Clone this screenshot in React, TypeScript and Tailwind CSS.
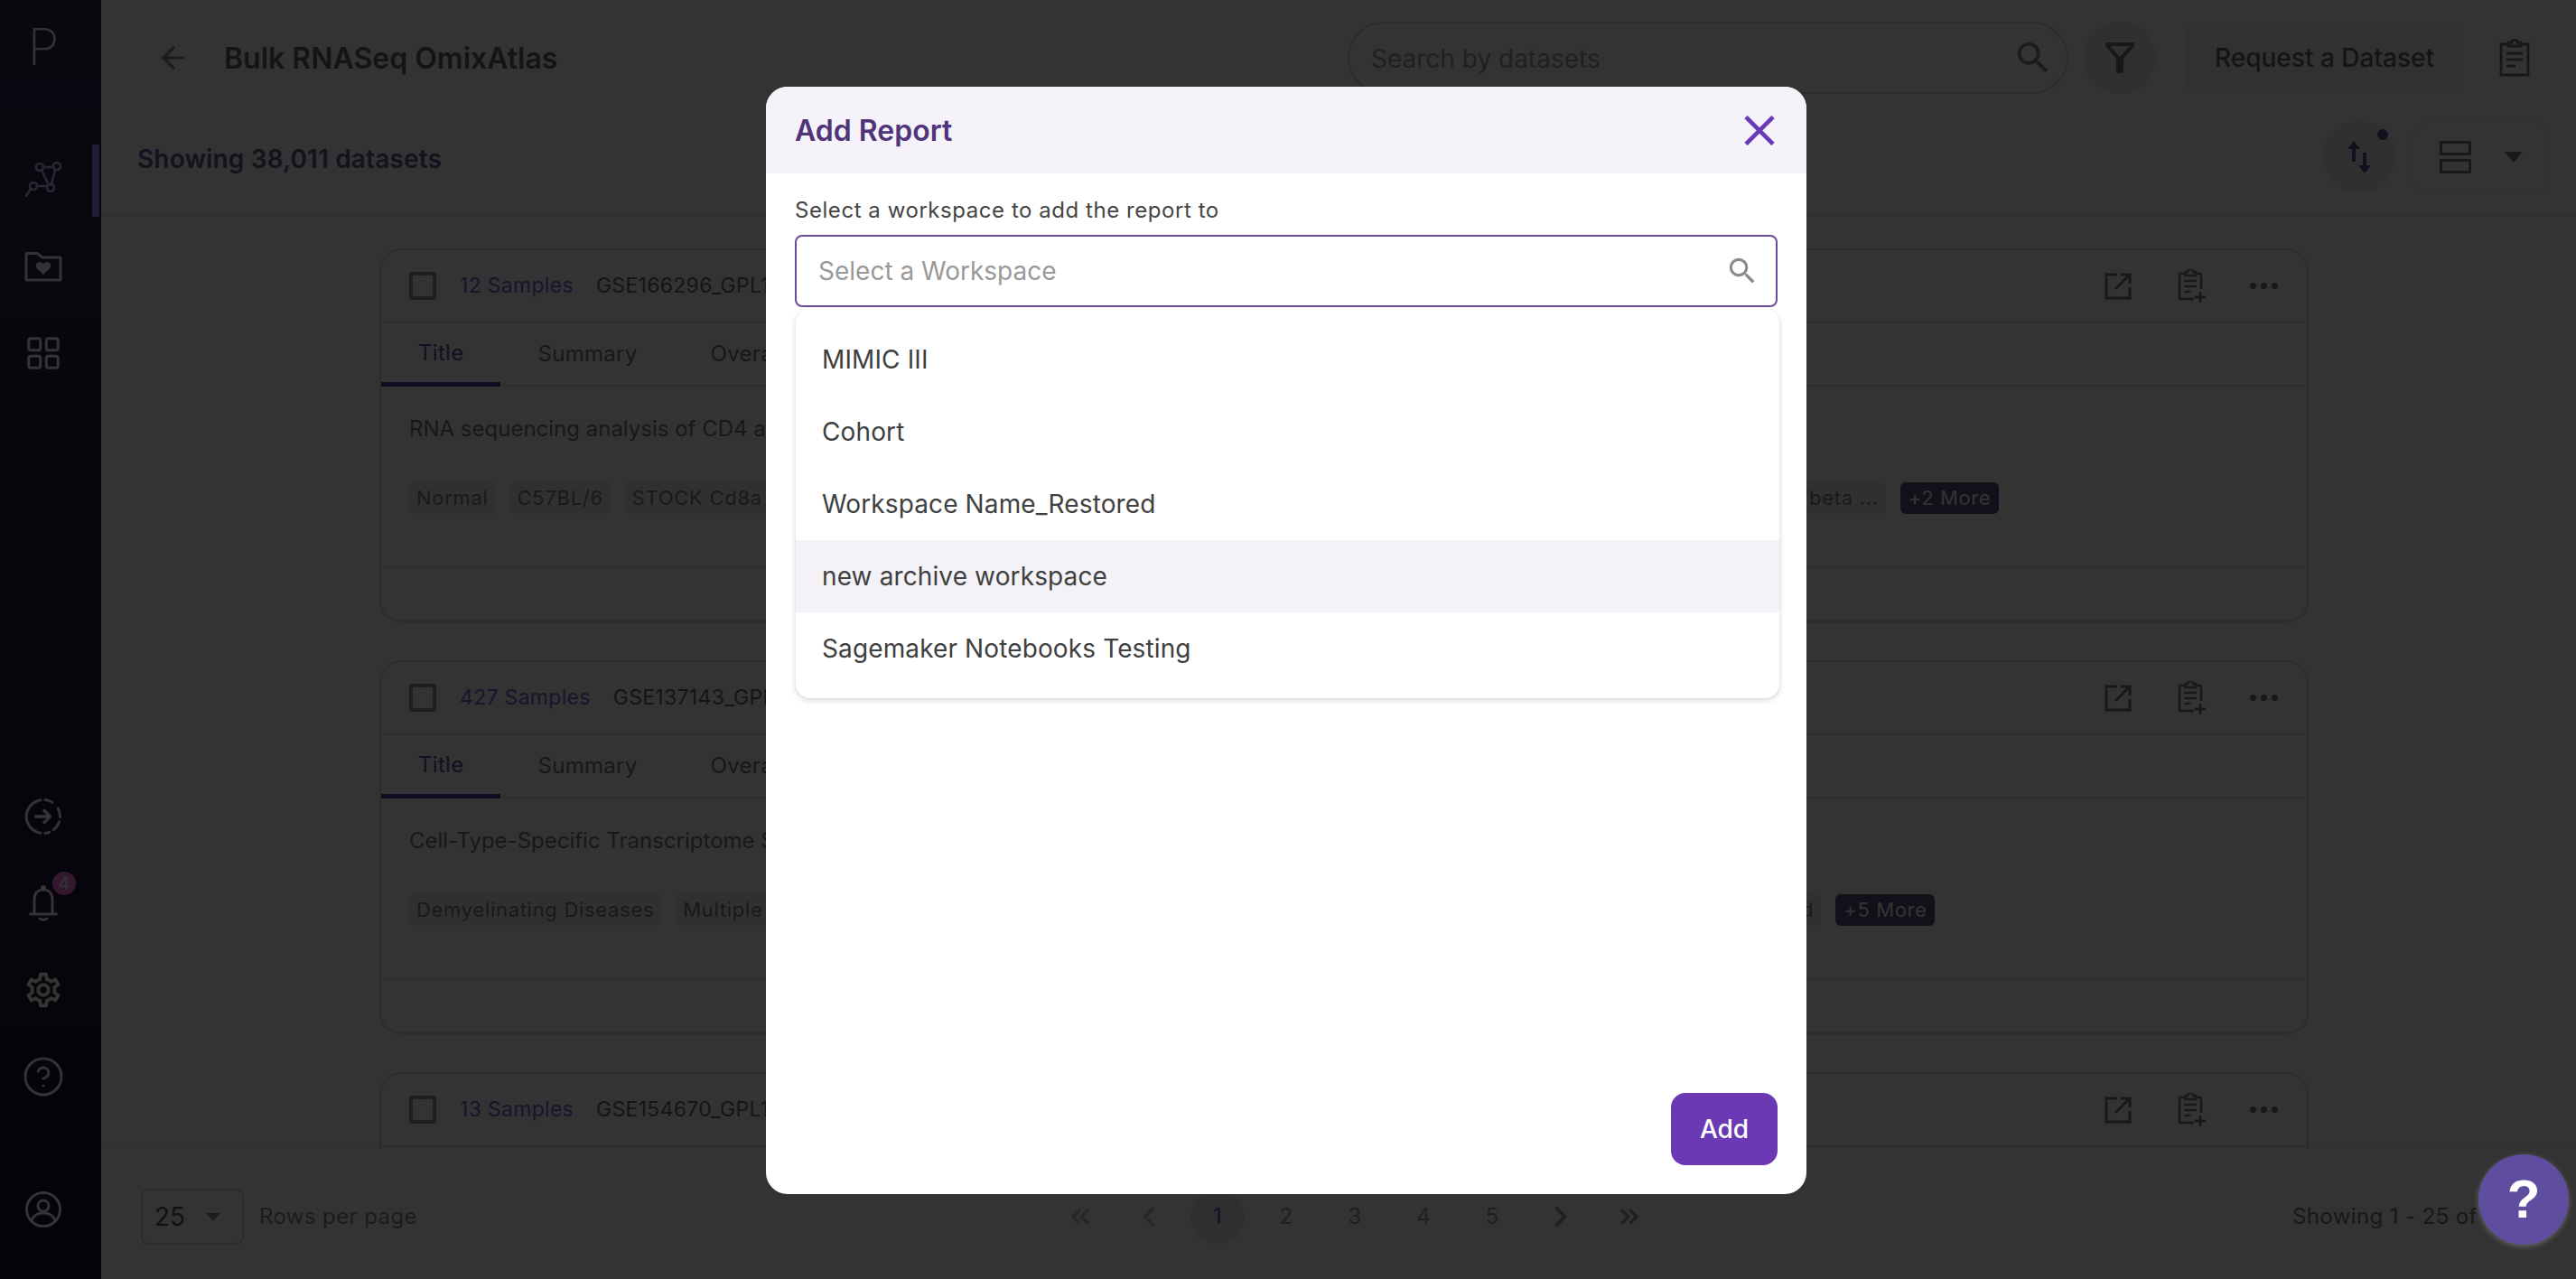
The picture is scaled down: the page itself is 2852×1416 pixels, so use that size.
import { ArrowLeft, ChevronLeft, ChevronRight, ChevronsLeft, ChevronsRight, CircleHelp } from 'lucide-react'
import { MdOutlineSettings, MdSearch } from 'react-icons/md'

const font = { fontFamily: 'Inter, "Noto Sans", sans-serif' }

function NetworkIcon() {
  return (
    <svg width="44" height="44" viewBox="0 0 44 44" fill="none" stroke="#d2beff" strokeWidth="2.6" strokeLinecap="round">
      <path d="M22 8 H33 M35 11 L31 27 M20 11 L28 28 M15 29 H26 M8 32 L3 40" />
      <circle cx="18" cy="8" r="4" />
      <circle cx="37" cy="7" r="4" />
      <circle cx="30" cy="31" r="4" />
      <circle cx="11" cy="29" r="4" />
    </svg>
  )
}

function FolderHeartIcon() {
  return (
    <svg width="42" height="34" viewBox="0 0 42 34" fill="none">
      <path d="M3 2.5 H14 L20 7 H39 Q40 7 40 8 V31 Q40 32 39 32 H3 Q2 32 2 31 V3.5 Q2 2.5 3 2.5 Z" stroke="#fff" strokeWidth="3" strokeLinejoin="round" />
      <path d="M21 26 L14 19.5 C10 14 17 9 21 14 C25 9 32 14 28 19.5 Z" fill="#fff" />
    </svg>
  )
}

function GridIcon() {
  return (
    <svg width="36" height="36" viewBox="0 0 36 36" fill="none" stroke="#fff" strokeWidth="3">
      <rect x="1.75" y="1.75" width="13" height="13" rx="2.5" />
      <rect x="21.25" y="1.75" width="13" height="13" rx="2.5" />
      <rect x="1.75" y="21.25" width="13" height="13" rx="2.5" />
      <rect x="21.25" y="21.25" width="13" height="13" rx="2.5" />
    </svg>
  )
}

function DashedArrowIcon() {
  return (
    <svg width="42" height="42" viewBox="0 0 42 42" fill="none" stroke="#fff" strokeWidth="3" strokeLinecap="round" strokeLinejoin="round">
      <path d="M18 2.7 A18.5 18.5 0 0 0 18 39.3" />
      <path d="M22.9 2.6 A18.5 18.5 0 0 1 30.8 5.3 M37.2 12 A18.5 18.5 0 0 1 39.5 21.6 M38.6 26.7 A18.5 18.5 0 0 1 32.1 35.8 M27.6 38.3 A18.5 18.5 0 0 1 22.9 39.4" />
      <path d="M12.5 21 H28.5 M22 14.5 L28.5 21 L22 27.5" strokeWidth="3.5" />
    </svg>
  )
}

function BellIcon() {
  return (
    <svg width="32" height="40" viewBox="0 0 32 40" fill="none" stroke="#fff" strokeWidth="3" strokeLinecap="round">
      <circle cx="16" cy="3" r="1.5" fill="#fff" />
      <path d="M6 31 V16 C6 9 10 5 16 5 C22 5 26 9 26 16 V31 M1.5 32 H30.5 M12 37 Q16 39.5 20 37" />
    </svg>
  )
}

function UserIcon() {
  return (
    <svg width="42" height="42" viewBox="0 0 42 42" fill="none" stroke="#fff" strokeWidth="3">
      <circle cx="21" cy="21" r="18.5" />
      <circle cx="21" cy="17" r="6" />
      <path d="M8 33.5 C10 27 16 25 21 25 C26 25 32 27 34 33.5" />
    </svg>
  )
}

function FilterIcon() {
  return (
    <svg width="32" height="34" viewBox="0 0 32 34" fill="#7a7a80">
      <path d="M0 0 H32 V4 L20 18 V32 Q20 34 18 34 H14 Q12 34 12 32 V18 L0 4 Z M5 4 L16 16 L27 4 Z" fillRule="evenodd" />
    </svg>
  )
}

function ClipboardIcon() {
  return (
    <svg width="34" height="42" viewBox="0 0 34 42" fill="none" stroke="#7a7a80" strokeWidth="3">
      <path d="M10 6 H2 V40 H32 V6 H24" />
      <path d="M10 8 V4 H14 A3 3 0 0 1 20 4 H24 V8 Z" />
      <path d="M8 16 H26 M8 23 H26 M8 30 H18" />
    </svg>
  )
}

function ClipboardPlusIcon() {
  return (
    <svg width="32" height="38" viewBox="0 0 32 38" fill="none" stroke="#7a7a80" strokeWidth="2.5">
      <path d="M8 5 H2 V33 H18 M26 22 V5 H20" />
      <path d="M8 7 V3 H11 A3 3 0 0 1 17 3 H20 V7 Z" />
      <path d="M7 13 H21 M7 19 H21 M7 25 H14 M25 25 V37 M19 31 H31" />
    </svg>
  )
}

function OpenIcon() {
  return (
    <svg width="30" height="30" viewBox="0 0 30 30" fill="none" stroke="#7a7a80" strokeWidth="3">
      <path d="M14 2 H2 V28 H28 V16" />
      <path d="M12 18 L28 2 M18 2 H28 V12" />
    </svg>
  )
}

function SortIcon() {
  return (
    <svg width="28" height="36" viewBox="0 0 28 36" fill="#5a4f9a">
      <path d="M8 0 L15 9 H10 V23 H6 V9 H1 Z M18 13 H22 V27 H27 L20 36 L13 27 H18 Z" />
    </svg>
  )
}

function CloseIcon() {
  return (
    <svg width="34" height="33" viewBox="0 0 34 33" fill="none" stroke="#6a3bb5" strokeWidth="4.6">
      <path d="M2 1.5 L32 31.5 M32 1.5 L2 31.5" />
    </svg>
  )
}

function Chip({ text, className = '' }: { text: string; className?: string }) {
  return <span className={`h-[35px] flex items-center px-2 rounded-md bg-[#eeeef2] text-[22px] tracking-[0.7px] text-[#7d7d90] whitespace-nowrap overflow-hidden ${className}`}>{text}</span>
}

function DatasetCard({ samples, id, title, chips, more }: { samples: string; id: string; title?: string; chips?: { text: string; className?: string }[]; more?: string }) {
  return (
    <div className="w-[2136px] h-[414px] shrink-0 border-2 border-[#dcdce4] rounded-[24px] flex flex-col">
      <div className="h-[81px] border-b-2 border-[#e4e4e8] shrink-0 flex items-center pl-[31px] pr-[32px]">
        <span className="w-[30px] h-[31px] border-[4px] border-[#999] rounded-[3px]" />
        <span className="ml-[26px] text-[23px] tracking-[0.3px] text-[#7a66d8]">{samples}</span>
        <span className="ml-[25px] text-[23px] tracking-[0.3px] text-[#6a6a70]">{id}</span>
        <div className="ml-auto flex items-center">
          <OpenIcon />
          <span className="ml-[51px]"><ClipboardPlusIcon /></span>
          <span className="ml-[48px] flex gap-[5px]">
            <i className="w-[7px] h-[7px] rounded-full bg-[#7a7a80]" />
            <i className="w-[7px] h-[7px] rounded-full bg-[#7a7a80]" />
            <i className="w-[7px] h-[7px] rounded-full bg-[#7a7a80]" />
          </span>
        </div>
      </div>
      {title && (
        <>
          <div className="h-[70px] shrink-0 flex border-b-2 border-[#e4e4e8] text-[24px] tracking-[0.3px] text-[#77777d]">
            <span className="px-[41px] flex items-center border-b-[5px] border-[#5b3aa8] text-[#5f4bb0] -mb-[2px]">Title</span>
            <span className="px-[41px] flex items-center">Summary</span>
            <span className="px-[40px] flex items-center">Overall Design</span>
          </div>
          <div className="flex-1 pl-[31px]">
            <p className="mt-[29px] text-[24px] leading-[36px] text-[#77777d] whitespace-nowrap">{title}</p>
            <div className="mt-[41px] flex gap-[16px]">
              {chips?.map((c) => (
                <Chip key={c.text} text={c.text} className={c.className} />
              ))}
              <span className="h-[35px] flex items-center px-[9px] rounded-md bg-[#55557c] text-[22px] tracking-[0.6px] text-[#ffffff] whitespace-nowrap">{more}</span>
            </div>
          </div>
          <div className="h-[60px] shrink-0 border-t-2 border-[#e4e4e8]" />
        </>
      )}
    </div>
  )
}

function SideItem({ children, className = '' }: { children: React.ReactNode; className?: string }) {
  return <div className={`h-[96px] w-full flex items-center justify-center pr-[16px] relative ${className}`}>{children}</div>
}

function Sidebar() {
  return (
    <aside className="w-[112px] shrink-0 h-full bg-linear-to-b from-[#322e52] to-[#14142c] flex flex-col items-center">
      <div className="h-[151px] w-full flex justify-center pr-[16px] pt-[12px]">
        <span className="text-[56px] leading-[80px] font-extralight text-white">P</span>
      </div>
      <SideItem>
        <NetworkIcon />
        <span className="absolute right-[2px] top-[9px] w-[8px] h-[80px] bg-[#a096ff]" />
      </SideItem>
      <SideItem><FolderHeartIcon /></SideItem>
      <SideItem><GridIcon /></SideItem>
      <SideItem className="mt-auto"><DashedArrowIcon /></SideItem>
      <SideItem>
        <BellIcon />
        <span className="absolute left-[58px] top-[13px] w-[26px] h-[26px] rounded-full bg-[#ff78e8] text-white text-[20px] flex items-center justify-center">4</span>
      </SideItem>
      <SideItem><MdOutlineSettings size={46} color="#fff" /></SideItem>
      <SideItem><CircleHelp size={48} color="#fff" strokeWidth={1.5} /></SideItem>
      <div className="w-full mt-[26px] border-t border-[#221c4c]" />
      <SideItem className="mt-[24px] mb-[29px]"><UserIcon /></SideItem>
    </aside>
  )
}

function Pager() {
  const pageItem = 'w-[76px] h-[60px] flex items-center justify-center text-[24px] text-[#9a9a9f]'
  return (
    <div className="ml-[696px] flex items-center">
      <span className={pageItem}><ChevronsLeft size={32} color="#c4c4c4" strokeWidth={2.6} /></span>
      <span className={pageItem}><ChevronLeft size={36} color="#c4c4c4" strokeWidth={2.5} /></span>
      <span className={pageItem}><span className="w-[60px] h-[60px] rounded-full bg-[#ececf0] flex items-center justify-center text-[#5f4bb0]">1</span></span>
      <span className={pageItem}>2</span>
      <span className={pageItem}>3</span>
      <span className={pageItem}>4</span>
      <span className={pageItem}>5</span>
      <span className={pageItem}><ChevronRight size={36} color="#9b9b9b" strokeWidth={2.5} /></span>
      <span className={pageItem}><ChevronsRight size={32} color="#9b9b9b" strokeWidth={2.6} /></span>
    </div>
  )
}

export default function App() {
  const workspaces = ['MIMIC III', 'Cohort', 'Workspace Name_Restored', 'new archive workspace', 'Sagemaker Notebooks Testing']

  return (
    <div className="relative w-[2852px] h-[1416px] overflow-hidden bg-white flex" style={font}>
      <Sidebar />

      <main className="flex-1 min-w-0 flex flex-col h-full">
        <header className="h-[128px] shrink-0 flex items-center pl-[61px] pr-[51px]">
          <ArrowLeft size={38} color="#8a8a90" strokeWidth={2} />
          <h1 className="ml-[37px] mt-[2px] text-[32px] font-semibold text-[#66666c]">Bulk RNASeq OmixAtlas</h1>
          <div className="ml-auto flex items-center">
            <div className="w-[798px] h-[80px] rounded-full border-2 border-[#d8d8e4] flex items-center pl-[24px] pr-[14px]">
              <span className="mt-[2px] text-[28px] text-[#a0a0a6]">Search by datasets</span>
              <MdSearch size={46} color="#8a8a90" className="ml-auto" />
            </div>
            <span className="ml-[17px] w-[80px] h-[80px] rounded-full bg-[#eeeef2] flex items-center justify-center"><FilterIcon /></span>
            <span className="ml-[32px] w-[309px] h-[80px] rounded-[16px] bg-[#f2f2f6] flex items-center justify-center text-[28px] font-medium text-[#66666c]">Request a Dataset</span>
            <span className="ml-[39px]"><ClipboardIcon /></span>
          </div>
        </header>

        <div className="h-[112px] shrink-0 flex items-center pl-[40px] pr-[29px] pb-[18px] border-b-2 border-[#f0f0f4]">
          <span className="mt-[4px] text-[28px] font-semibold tracking-[0.15px] text-[#6a5a98]">Showing 38,011 datasets</span>
          <div className="ml-auto flex items-center">
            <span className="relative w-[80px] h-[80px] rounded-full bg-[#eeeef2] flex items-center justify-center">
              <SortIcon />
              <i className="absolute right-[8px] top-[9px] w-[12px] h-[12px] rounded-full bg-[#5a4f9a]" />
            </span>
            <div className="ml-[18px] w-[153px] h-[80px] rounded-[16px] border-2 border-[#f4f4f8] flex items-center pl-[29px]">
              <span className="flex flex-col gap-[4px]">
                <i className="block w-[35px] h-[16px] border-[3px] border-[#7a7a80]" />
                <i className="block w-[35px] h-[16px] border-[3px] border-[#7a7a80]" />
              </span>
              <span className="ml-[37px] w-0 h-0 border-x-[10px] border-x-transparent border-t-[12px] border-t-[#7a7a80]" />
            </div>
          </div>
        </div>

        <div className="flex-1 min-h-0 overflow-hidden pt-[35px] pl-[308px] flex flex-col gap-[42px]">
          <DatasetCard
            samples="12 Samples"
            id="GSE166296_GPL19057"
            title="RNA sequencing analysis of CD4 and CD8 T cells"
            chips={[{ text: 'Normal' }, { text: 'C57BL/6' }, { text: 'STOCK Cd8a', className: 'w-[600px]' }, { text: 'T cell receptor alpha beta ...', className: 'w-[780px] justify-end' }]}
            more="+2 More"
          />
          <DatasetCard
            samples="427 Samples"
            id="GSE137143_GPL16791"
            title="Cell-Type-Specific Transcriptome Signatures"
            chips={[{ text: 'Demyelinating Diseases' }, { text: 'Multiple Sclerosis', className: 'w-[600px]' }, { text: 'Blood', className: 'w-[652px] justify-end' }]}
            more="+5 More"
          />
          <DatasetCard samples="13 Samples" id="GSE154670_GPL19057" />
        </div>

        <footer className="h-[144px] shrink-0 flex items-center pl-[44px] pt-[6px] shadow-[0_-2px_6px_rgba(0,0,0,0.04)] text-[24px] text-[#8a8a90] whitespace-nowrap">
          <div className="w-[114px] h-[62px] rounded-[8px] border-2 border-[#d8d8dc] flex items-center pl-[13px]">
            <span className="text-[28px] text-[#55555a]">25</span>
            <span className="ml-[23px] w-0 h-0 border-x-[8px] border-x-transparent border-t-[9px] border-t-[#8a8a90]" />
          </div>
          <span className="ml-[17px] tracking-[0.4px]">Rows per page</span>
          <Pager />
          <span className="ml-[696px] tracking-[0.4px] text-[#77777d]">Showing 1 - 25 of 38,011</span>
        </footer>
      </main>

      <div className="absolute inset-0 bg-black/80">
        <div className="ml-[848px] mt-[96px] w-[1152px] h-[1226px] rounded-[24px] bg-white overflow-hidden flex flex-col">
          <div className="h-[96px] shrink-0 bg-[#f5f2fa] flex items-center justify-between pl-[32px] pr-[35px]">
            <h2 className="mt-[2px] text-[32px] font-semibold text-[#4f3479]">Add Report</h2>
            <CloseIcon />
          </div>
          <div className="flex-1 flex flex-col px-[32px] relative">
            <label className="mt-[25px] text-[24px] leading-[32px] tracking-[0.55px] text-[#444]">Select a workspace to add the report to</label>
            <div className="mt-[11px] h-[80px] rounded-[8px] border-2 border-[#6b4c9a] flex items-center pl-[24px] pr-[18px]">
              <span className="text-[28px] text-[#999]">Select a Workspace</span>
              <MdSearch size={38} color="#8a8a8a" className="ml-auto" />
            </div>
            <div className="mt-[2px] -mr-[2px] ml-px pt-[16px] pb-[15px] rounded-[16px] bg-white shadow-[0_2px_6px_rgba(0,0,0,0.18)]">
              {workspaces.map((name) => (
                <div key={name} className={`h-[80px] flex items-center pl-[29px] text-[28px] tracking-[0.12px] text-[#404040] ${name === 'new archive workspace' ? 'bg-[#f4f2f6]' : ''}`}>
                  {name}
                </div>
              ))}
            </div>
            <button className="absolute right-[32px] bottom-[32px] w-[118px] h-[80px] rounded-[16px] bg-[#6b39b3] text-[28px] font-medium text-white">Add</button>
          </div>
        </div>
      </div>

      <button className="absolute left-[2744px] top-[1278px] w-[100px] h-[100px] rounded-full bg-[#5f4ea0] shadow-[0_2px_6px_rgba(255,255,255,0.25)] text-white text-[60px] font-bold flex items-center justify-center" style={{ fontFamily: '"Liberation Sans", sans-serif' }}>?</button>
    </div>
  )
}
